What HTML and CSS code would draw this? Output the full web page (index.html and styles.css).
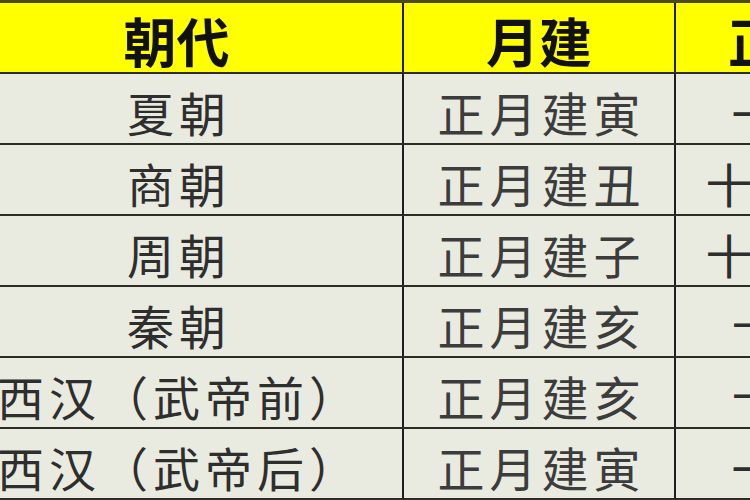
FILE: index.html
```html
<!DOCTYPE html>
<html lang="zh">
<head>
<meta charset="utf-8">
<title>朝代月建</title>
<link rel="stylesheet" href="styles.css">
</head>
<body>
<div class="frame">
  <div class="table">
    <div class="row head">
      <div class="cell c1">朝代</div>
      <div class="cell c2">月建</div>
      <div class="cell c3">正月</div>
    </div>
    <div class="row">
      <div class="cell c1">夏朝</div>
      <div class="cell c2">正月建寅</div>
      <div class="cell c3">一月</div>
    </div>
    <div class="row">
      <div class="cell c1">商朝</div>
      <div class="cell c2">正月建丑</div>
      <div class="cell c3">十二月</div>
    </div>
    <div class="row">
      <div class="cell c1">周朝</div>
      <div class="cell c2">正月建子</div>
      <div class="cell c3">十一月</div>
    </div>
    <div class="row">
      <div class="cell c1">秦朝</div>
      <div class="cell c2">正月建亥</div>
      <div class="cell c3">十月</div>
    </div>
    <div class="row">
      <div class="cell c1">西汉（武帝前）</div>
      <div class="cell c2">正月建亥</div>
      <div class="cell c3">十月</div>
    </div>
    <div class="row">
      <div class="cell c1">西汉（武帝后）</div>
      <div class="cell c2">正月建寅</div>
      <div class="cell c3">一月</div>
    </div>
  </div>
</div>
</body>
</html>
```

FILE: styles.css
```css
html, body {
  margin: 0;
  padding: 0;
  background: #e9ebe0;
}

.frame {
  width: 750px;
  height: 500px;
  overflow: hidden;
}

.table {
  display: flex;
  flex-direction: column;
  margin-left: -49px;
  width: 935px;
  border-top: 3px solid #4a4a22;
  font-family: "Noto Sans CJK SC", "Noto Sans CJK TC", sans-serif;
}

.row {
  display: flex;
  height: 69px;
  border-bottom: 2px solid #2c2c24;
  background: #e9ebe0;
}

.row.head {
  background: #ffff00;
}

.cell {
  display: flex;
  align-items: center;
  justify-content: center;
  white-space: nowrap;
  padding-top: 6px;
  box-sizing: border-box;
  font-size: 47px;
  font-weight: 400;
  letter-spacing: 5px;
  text-indent: 5px;
  color: #2e2e2e;
}

.c1 {
  width: 453px;
  border-right: 2px solid #1e1e1e;
}

.c2 {
  width: 272px;
  border-right: 2px solid #1e1e1e;
  color: #3c3c3c;
}

.c3 {
  width: 210px;
}

.head .cell {
  font-size: 53px;
  font-weight: 700;
  letter-spacing: 0;
  text-indent: 0;
  padding-top: 4px;
  color: #111111;
}
```
